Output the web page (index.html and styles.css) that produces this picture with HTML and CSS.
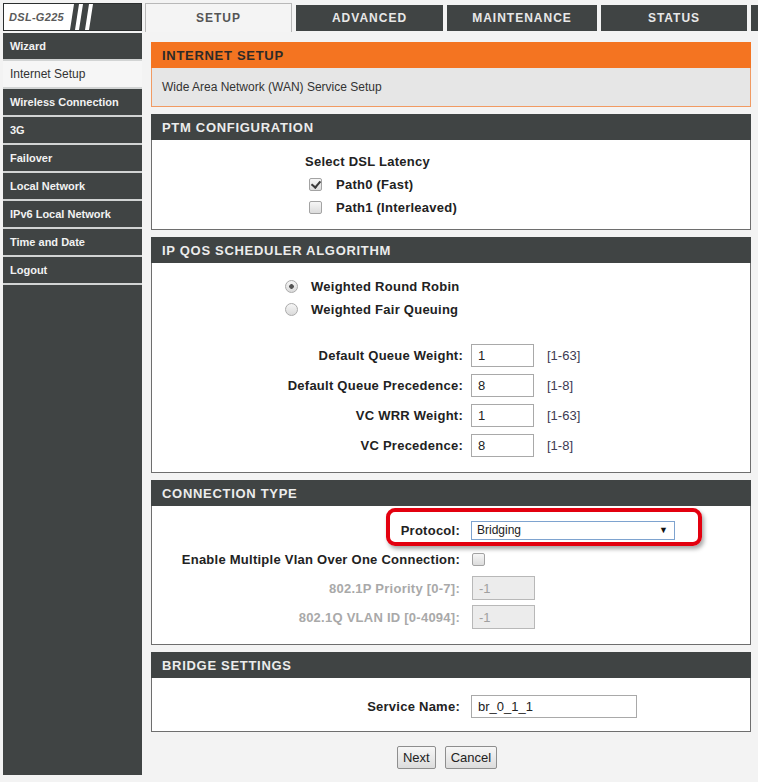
FILE: index.html
```html
<!DOCTYPE html>
<html lang="en">
<head>
  <meta charset="UTF-8" />
  <title>DSL-G225 Internet Setup</title>
  <link rel="stylesheet" href="styles.css">
</head>
<body>
  <div class="page">
    <div class="top">
      <div class="logo">
        <svg width="137" height="26" viewBox="0 0 137 26">
          <polygon points="0,0 70,0 66,26 0,26" fill="#fff"/>
          <polygon points="75,0 79,0 75,26 71,26" fill="#fff"/>
          <polygon points="85,0 89,0 85,26 81,26" fill="#fff"/>
          <text x="5" y="17" font-family="Liberation Sans" font-size="11" font-weight="bold" font-style="italic" letter-spacing="0.3" fill="#5a5a5a">DSL-G225</text>
        </svg>
      </div>
      <div class="tabs">
        <a class="tab active" href="#">SETUP</a>
        <a class="tab" href="#">ADVANCED</a>
        <a class="tab maint" href="#">MAINTENANCE</a>
        <a class="tab status" href="#">STATUS</a>
        <span class="tab"></span>
      </div>
    </div>

    <div class="main">
      <div class="sidebar">
        <a href="#">Wizard</a>
        <a class="current" href="#">Internet Setup</a>
        <a href="#">Wireless Connection</a>
        <a href="#">3G</a>
        <a href="#">Failover</a>
        <a href="#">Local Network</a>
        <a href="#">IPv6 Local Network</a>
        <a href="#">Time and Date</a>
        <a href="#">Logout</a>
      </div>

      <div class="content">
        <div class="panel">
          <div class="panel-head orange">INTERNET SETUP</div>
          <div class="desc">Wide Area Network (WAN) Service Setup</div>
        </div>

        <div class="panel">
          <div class="panel-head">PTM CONFIGURATION</div>
          <div class="panel-body ptm">
            <div class="latency">
              <div class="title">Select DSL Latency</div>
              <label class="opt"><input class="check" type="checkbox" checked> Path0 (Fast)</label>
              <label class="opt"><input class="check" type="checkbox"> Path1 (Interleaved)</label>
            </div>
          </div>
        </div>

        <div class="panel">
          <div class="panel-head">IP QOS SCHEDULER ALGORITHM</div>
          <div class="panel-body qos">
            <div class="algo">
              <label class="opt"><input class="radio" type="radio" name="algo" checked> Weighted Round Robin</label>
              <label class="opt"><input class="radio" type="radio" name="algo"> Weighted Fair Queuing</label>
            </div>
            <div class="form qos-form">
              <label>Default Queue Weight:</label>
              <input class="text" type="text" value="1">
              <span class="range">[1-63]</span>
              <label>Default Queue Precedence:</label>
              <input class="text" type="text" value="8">
              <span class="range">[1-8]</span>
              <label>VC WRR Weight:</label>
              <input class="text" type="text" value="1">
              <span class="range">[1-63]</span>
              <label>VC Precedence:</label>
              <input class="text" type="text" value="8">
              <span class="range">[1-8]</span>
            </div>
          </div>
        </div>

        <div class="panel">
          <div class="panel-head">CONNECTION TYPE</div>
          <div class="panel-body conn">
            <div class="form conn-form">
              <label>Protocol:</label>
              <div class="select-wrap">
                <select class="select">
                  <option>Bridging</option>
                  <option>PPPoE</option>
                  <option>IPoE</option>
                </select>
              </div>
              <label>Enable Multiple Vlan Over One Connection:</label>
              <div><input class="check shift" type="checkbox"></div>
              <label class="off">802.1P Priority [0-7]:</label>
              <div><input class="text shift" type="text" value="-1" disabled></div>
              <label class="off">802.1Q VLAN ID [0-4094]:</label>
              <div><input class="text shift" type="text" value="-1" disabled></div>
            </div>
            <div class="mark"></div>
          </div>
        </div>

        <div class="panel">
          <div class="panel-head">BRIDGE SETTINGS</div>
          <div class="panel-body bridge">
            <div class="form conn-form">
              <label>Service Name:</label>
              <div><input class="text wide" type="text" value="br_0_1_1"></div>
            </div>
          </div>
        </div>

        <div class="actions">
          <button class="btn">Next</button>
          <button class="btn">Cancel</button>
        </div>
      </div>
    </div>
  </div>
</body>
</html>
```

FILE: styles.css
```css
* {
  box-sizing: border-box;
  margin: 0;
  padding: 0;
}
body {
  font-family: 'Liberation Sans', Arial, sans-serif;
  background-color: #f3f3f3;
  color: #222;
  width: 758px;
  height: 782px;
  overflow: hidden;
}
.page {
  padding: 3px 0 0 3px;
}
.top {
  display: flex;
  height: 29px;
  overflow: hidden;
}
.logo {
  flex: none;
  width: 139px;
  height: 28px;
  background: #404444;
  border: 1px solid #2c2f2f;
}
.logo svg {
  display: block;
}
.tabs {
  display: flex;
  gap: 4px;
  margin-left: 3px;
}
.tab {
  flex: none;
  width: 147px;
  height: 26px;
  margin-top: 2px;
  background: #404444;
  color: #e8e8e8;
  font-size: 12px;
  font-weight: bold;
  letter-spacing: 1px;
  text-decoration: none;
  display: flex;
  justify-content: center;
  align-items: center;
}
.tab.active {
  height: 29px;
  margin-top: 0;
  background: #f4f4f4;
  color: #555;
  border: 1px solid #b8b8b8;
  border-bottom: none;
}
.tab.maint {
  width: 150px;
}
.tab.status {
  width: 146px;
}
.main {
  display: flex;
  margin-top: 1px;
}
.sidebar {
  flex: none;
  width: 139px;
  height: 742px;
  background: #404444;
  display: flex;
  flex-direction: column;
}
.sidebar a {
  height: 28px;
  border-bottom: 2px solid #d2d4d4;
  padding-left: 7px;
  display: flex;
  align-items: center;
  color: #f2f2f2;
  font-size: 11px;
  font-weight: bold;
  text-decoration: none;
}
.sidebar a.current {
  background: #f6f6f6;
  color: #333;
  font-size: 12px;
  font-weight: normal;
}
.content {
  flex: none;
  width: 612px;
  margin-left: 3px;
  padding: 9px 6px 0;
}
.panel {
  margin-bottom: 7px;
}
.panel-head {
  height: 26px;
  background: #404444;
  color: #ececec;
  font-size: 13px;
  font-weight: bold;
  letter-spacing: 0.7px;
  padding-left: 11px;
  display: flex;
  align-items: center;
}
.panel-head.orange {
  background: #f47421;
  color: #2e2a28;
}
.desc {
  height: 39px;
  background: #e6e6e6;
  border: 1px solid #f19a62;
  border-top: none;
  padding-left: 10px;
  font-size: 12px;
  color: #333;
  display: flex;
  align-items: center;
}
.panel-body {
  background: #fff;
  border: 1px solid #6e6e6e;
  border-top: none;
  font-size: 13px;
}
.ptm {
  height: 90px;
}
.qos {
  height: 210px;
}
.conn {
  height: 139px;
  position: relative;
}
.bridge {
  height: 54px;
}
.latency {
  padding: 10px 0 0 153px;
  font-weight: bold;
  letter-spacing: 0.25px;
}
.latency .title {
  line-height: 23px;
}
.opt {
  display: flex;
  align-items: center;
  height: 23px;
  gap: 14px;
  font-weight: bold;
  letter-spacing: 0.25px;
}
.latency .opt {
  margin-left: 4px;
}
.algo {
  padding: 12px 0 0 133px;
}
.algo .opt {
  gap: 13px;
}
.check {
  appearance: none;
  flex: none;
  width: 13px;
  height: 13px;
  border: 1px solid #a3a3a3;
  border-radius: 2px;
  background: linear-gradient(#f6f6f6, #dcdcdc);
  position: relative;
  vertical-align: middle;
}
.check:checked::after {
  content: '';
  position: absolute;
  left: 3px;
  top: 0;
  width: 4px;
  height: 7px;
  border: solid #3a3a3a;
  border-width: 0 2px 2px 0;
  transform: rotate(40deg);
}
.radio {
  appearance: none;
  flex: none;
  width: 13px;
  height: 13px;
  border: 1px solid #ababab;
  border-radius: 50%;
  background: linear-gradient(#f6f6f6, #dadada);
}
.radio:checked {
  background: radial-gradient(circle, #555 0 2px, transparent 2.6px), linear-gradient(#f6f6f6, #dadada);
}
.form {
  display: grid;
  align-items: center;
}
.form label {
  text-align: right;
  font-weight: bold;
  letter-spacing: 0.25px;
}
.form label.off {
  color: #a9a9a9;
}
.qos-form {
  margin-top: 23px;
  grid-template-columns: 311px 63px auto;
  grid-auto-rows: 23px;
  column-gap: 8px;
  row-gap: 7px;
}
.conn-form {
  grid-template-columns: 308px auto;
  grid-auto-rows: 24px;
  column-gap: 11px;
  row-gap: 5px;
}
.conn .conn-form {
  padding-top: 12px;
}
.bridge .conn-form {
  padding-top: 16px;
}
.conn-form > div {
  display: flex;
  align-items: center;
}
.text {
  width: 63px;
  height: 23px;
  border: 1px solid #a9a9a9;
  padding: 0 6px;
  font: 13px 'Liberation Sans', Arial, sans-serif;
  color: #222;
  background: #fff;
}
.text:disabled {
  height: 24px;
  background: #ececec;
  border-color: #b8b8b8;
  color: #a0a0a0;
}
.text.wide {
  width: 166px;
}
.shift {
  margin-left: 1px;
}
.range {
  margin-left: 5px;
  color: #3c3a52;
}
.select-wrap {
  position: relative;
  width: 204px;
}
.select {
  appearance: none;
  width: 204px;
  height: 19px;
  border: 1px solid #7ea3cf;
  background: #fff;
  padding-left: 5px;
  font: 12px 'Liberation Sans', Arial, sans-serif;
  color: #222;
}
.select-wrap::after {
  content: '\25BC';
  position: absolute;
  right: 7px;
  top: 4px;
  font-size: 9px;
  color: #111;
}
.mark {
  position: absolute;
  left: 234px;
  top: 2px;
  width: 316px;
  height: 38px;
  border: 4px solid #e3000f;
  border-radius: 9px;
  box-shadow: 2px 3px 4px rgba(0, 0, 0, 0.35);
}
.actions {
  display: flex;
  justify-content: center;
  gap: 9px;
  margin-top: 14px;
  padding-right: 8px;
}
.btn {
  height: 23px;
  padding: 0 5px;
  border: 1px solid #8e8e8e;
  border-radius: 2px;
  background: linear-gradient(#f7f7f7, #dcdcdc);
  font: 13px 'Liberation Sans', Arial, sans-serif;
  color: #222;
  cursor: pointer;
}
```
